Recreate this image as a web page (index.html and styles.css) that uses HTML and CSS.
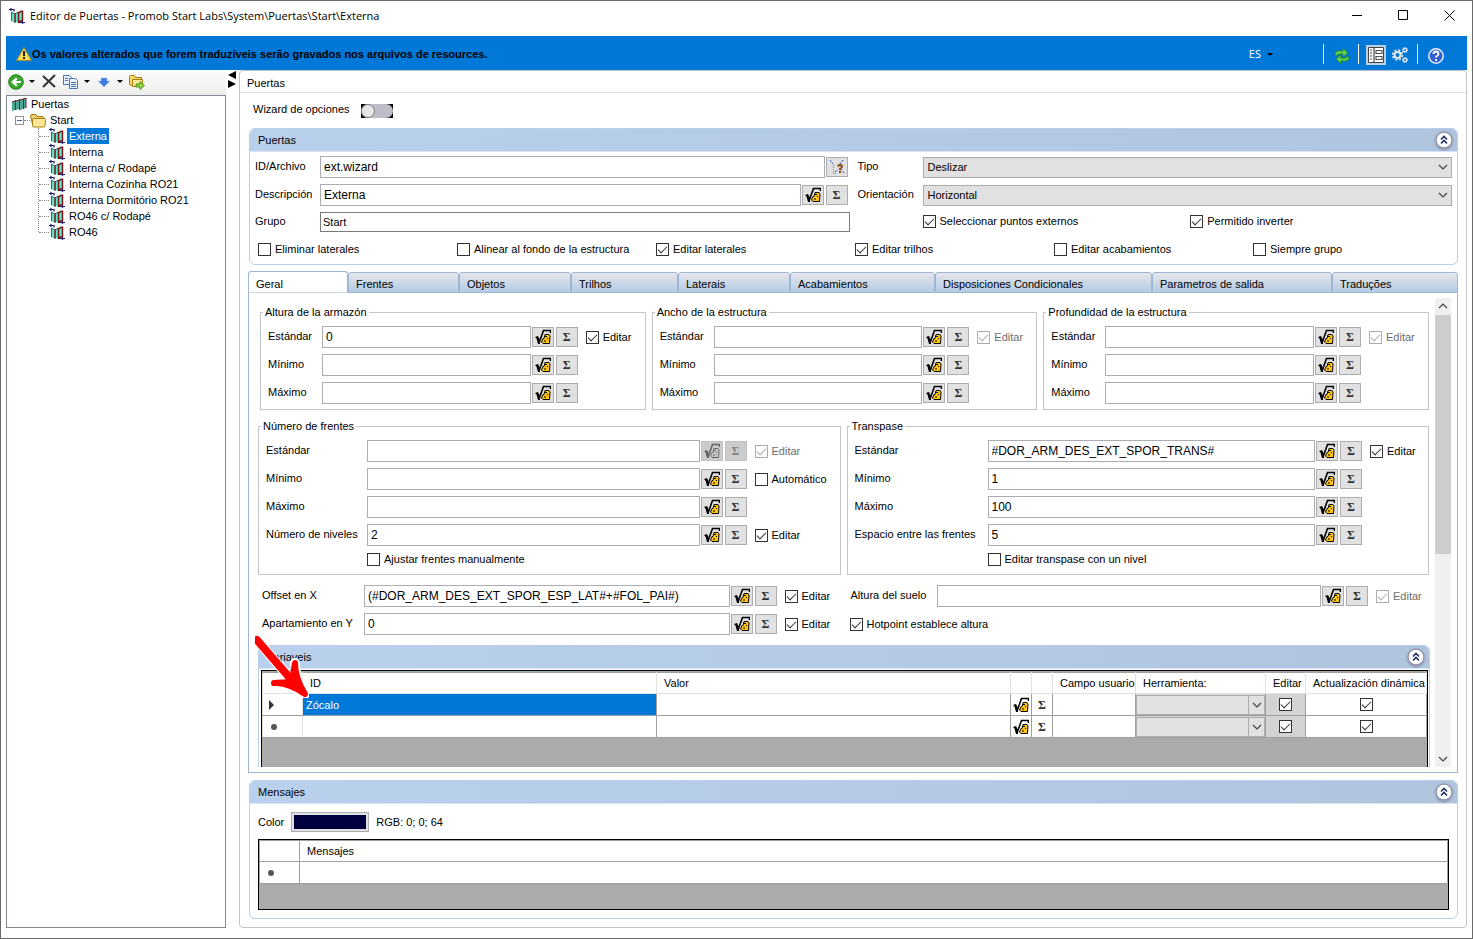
FILE: index.html
```html
<!DOCTYPE html>
<html lang="es">
<head>
    <meta charset="UTF-8">
    <meta name="viewport" content="width=device-width, initial-scale=1.0">
    <title>Editor de Puertas</title>
    <link rel="stylesheet" href="styles.css">
</head>
<body>
    <!-- shared icons -->
    <svg class="sprite" aria-hidden="true">
        <symbol id="i-door" viewBox="0 0 16 16">
            <path d="M2 4l4 2 3-2 1 1 4-2v10l-4 2-1-1-3 1-4-2z" fill="#62e6cb"/>
            <path d="M2.500 4v9M2 4l4 2 3-2" fill="none" stroke="#2b6a66"/>
            <path d="M6 5.500v9M9.500 4v10.500M9 5l4-2M9 14.500l4-2" fill="none" stroke="#7a1518" stroke-width="1.500"/>
            <path d="M13.500 2.500V13" stroke="#7a1518" stroke-width="1.500"/>
            <path d="M0 1.500h5v2M2 0v3M10 14.500h6M13.500 13v3" fill="none" stroke="#14147a" stroke-width="1.200"/>
        </symbol>
        <symbol id="i-sqrt" viewBox="0 0 16 16">
            <path d="M4 14L8.500 1.500h7V4" fill="none" stroke="#000" stroke-width="1.600"/>
            <path d="M0 8l3-1 2 4v4H3L1.500 9.500z" fill="#000"/>
            <path d="M10 5.500h4l1 1.500-.5 7.500H8L6.500 13 8 9.500h1z" fill="#ffc20e" stroke="#000"/>
            <path d="M10 7h2v1h-2zM12 9h1v1h-1zM9 11.500h2v1H9z" fill="#000"/>
        </symbol>
        <symbol id="i-folder" viewBox="0 0 16 16">
            <path d="M.5 4q0-1.500 1.500-1.500h4l1 2h5.500q1.500 0 1.500 1.500v8H3z" fill="#f0d070" stroke="#a67c12"/>
            <path d="M3.500 6.500h11q1 0 1 1l-.5 6q0 1.500-1.500 1.500H4q-1.500 0-1.500-1.500v-6q0-1 1-1z" fill="#fbe795" stroke="#a67c12"/>
        </symbol>
        <symbol id="i-up" viewBox="0 0 18 18">
            <circle cx="9" cy="9" r="8" fill="#fff" stroke="#8f93a5" stroke-width="1.400"/>
            <path d="M6 8.500l3-3 3 3M6 12.500l3-3 3 3" fill="none" stroke="#1f2f66" stroke-width="1.600"/>
        </symbol>
        <symbol id="i-chevron" viewBox="0 0 10 6">
            <path d="M1 1l4 4 4-4" fill="none" stroke="#444" stroke-width="1.200"/>
        </symbol>
    </svg>

    <div class="window">
        <header class="titlebar">
            <svg class="icon"><use href="#i-door"/></svg>
            <h1>Editor de Puertas - Promob Start Labs\System\Puertas\Start\Externa</h1>
            <button type="button" aria-label="Minimizar"><svg viewBox="0 0 11 11"><path d="M0 5.500h10" stroke="#000"/></svg></button>
            <button type="button" aria-label="Maximizar"><svg viewBox="0 0 11 11"><path d="M.5.5h9v9h-9z" fill="none" stroke="#000"/></svg></button>
            <button type="button" aria-label="Cerrar"><svg viewBox="0 0 11 11"><path d="M.5.5l10 10M10.500.5l-10 10" stroke="#000"/></svg></button>
        </header>

        <div class="notice">
            <svg class="icon" viewBox="0 0 16 16">
                <path d="M8 1.500L15.500 14.500H.5z" fill="#f7d94c" stroke="#9a8a3a" stroke-linejoin="round"/>
                <path d="M7 5h2v5H7zM7 11h2v2H7z" fill="#222"/>
            </svg>
            <strong>Os valores alterados que forem traduzíveis serão gravados nos arquivos de resources.</strong>
            <button type="button" class="lang">ES <i class="caret"></i></button>
            <div class="tools">
                <button type="button" aria-label="Actualizar"><svg viewBox="0 0 16 16">
                    <path d="M1 7q0-5 6-4h2V0l5 5-5 4V6H6Q3 6 3 8z" fill="#5fd04a" stroke="#1f7a1f" stroke-width=".7"/>
                    <path d="M15 9q0 5-6 4H7v3l-5-5 5-4v3h3q3 0 3-2z" fill="#5fd04a" stroke="#1f7a1f" stroke-width=".7"/>
                </svg></button>
            </div>
            <div class="tools pair">
                <button type="button" class="on" aria-label="Propiedades"><svg viewBox="0 0 16 16">
                    <path d="M.5.5h15v15H.5z" fill="#fff" stroke="#444"/>
                    <path d="M6 1v14M2 3h2M2 6h2M2 9h2M2 12h2" stroke="#444" stroke-width="1.200"/>
                    <path d="M8 3.500h6v3H8zM8 9.500h6v3H8z" fill="none" stroke="#555" stroke-width="1.200"/>
                </svg></button>
                <button type="button" aria-label="Configuración"><svg viewBox="0 0 16 16" fill="none" stroke="#e6e8ec">
                    <circle cx="5.500" cy="8" r="3" stroke-width="2"/>
                    <circle cx="5.500" cy="8" r="4.800" stroke-width="1.800" stroke-dasharray="2 1.770"/>
                    <circle cx="13" cy="3" r="1.700" stroke-width="1.300"/>
                    <circle cx="13" cy="3" r="2.600" stroke-dasharray="1.100 .940"/>
                    <circle cx="13" cy="13" r="1.700" stroke-width="1.300"/>
                    <circle cx="13" cy="13" r="2.600" stroke-dasharray="1.100 .940"/>
                </svg></button>
            </div>
            <div class="tools">
                <button type="button" aria-label="Ayuda"><svg viewBox="0 0 16 16">
                    <circle cx="8" cy="8" r="7.200" fill="#2f62cf" stroke="#e6edf8" stroke-width="1.500"/>
                    <path d="M5.500 6q0-2.500 2.500-2.500T10.500 6q0 1.200-1.500 2-1 .5-1 1.500M8 11v2" fill="none" stroke="#fff" stroke-width="1.800"/>
                </svg></button>
            </div>
        </div>

        <div class="workspace">
            <aside class="sidebar">
                <div class="toolbar">
                    <button type="button" aria-label="Volver"><svg viewBox="0 0 16 16">
                        <circle cx="8" cy="8" r="7.300" fill="#38a82c" stroke="#1f7d1a"/>
                        <path d="M3 8l5-4.500L9.500 5 8 7h5v2H8l1.500 2L8 12.500z" fill="#fff"/>
                    </svg><i class="caret"></i></button>
                    <button type="button" aria-label="Eliminar"><svg viewBox="0 0 16 16"><path d="M2 2l12 11M14 1L2 13" stroke="#333" stroke-width="2"/></svg></button>
                    <button type="button" aria-label="Copiar"><svg viewBox="0 0 16 16">
                        <path d="M.5 1.500h6l2 2v7h-8z" fill="#e8f0fb" stroke="#4a74b5"/>
                        <path d="M6.500 4.500h6l2 2v8h-8z" fill="#e8f0fb" stroke="#4a74b5"/>
                        <path d="M2 4.500h3M2 6.500h3M8 8.500h5M8 10.500h5M8 12.500h5" stroke="#4a74b5"/>
                    </svg><i class="caret"></i></button>
                    <button type="button" aria-label="Bajar"><svg viewBox="0 0 16 16"><path d="M5 4h6v3h3l-6 6-6-6h3z" fill="#3d7be0" stroke="#a9c7f3" stroke-width=".6"/></svg><i class="caret"></i></button>
                    <button type="button" aria-label="Exportar"><svg viewBox="0 0 16 16">
                        <path d="M.5 2.500q0-1 1-1h4l1 2h6v8h-10q-2 0-2-2z" fill="#f5d76a" stroke="#a67c12"/>
                        <path d="M3.500 5.500h10v7h-10z" fill="#fbe795" stroke="#a67c12"/>
                        <path d="M7 10h4V7.500l4.500 4-4.500 4V13H7z" fill="#8ed63a" stroke="#3f7d12" stroke-width=".8"/>
                    </svg></button>
                </div>
                <nav class="tree" aria-label="Puertas">
                    <div class="node">
                        <svg class="icon" viewBox="0 0 16 16">
                            <path d="M1 6l3-1v9l-3 1zM5 5l3-1v9l-3 1zM9 4l3-1v10l-3 1zM12 3l3-1v10l-3 1z" fill="#4fa596"/>
                            <path d="M1 6l3-1M5 5l3-1M9 4l6-2M4.500 4v10M8.500 3v11M12.500 3v10M15 2v10" fill="none" stroke="#6b2a2a"/>
                        </svg>
                        <a href="#">Puertas</a>
                    </div>
                    <div class="node start">
                        <button type="button" class="expander" aria-label="Contraer"></button>
                        <svg class="icon"><use href="#i-folder"/></svg>
                        <a href="#">Start</a>
                    </div>
                    <ul>
                        <li class="node"><svg class="icon"><use href="#i-door"/></svg><a href="#" class="selected">Externa</a></li>
                        <li class="node"><svg class="icon"><use href="#i-door"/></svg><a href="#">Interna</a></li>
                        <li class="node"><svg class="icon"><use href="#i-door"/></svg><a href="#">Interna c/ Rodapé</a></li>
                        <li class="node"><svg class="icon"><use href="#i-door"/></svg><a href="#">Interna Cozinha RO21</a></li>
                        <li class="node"><svg class="icon"><use href="#i-door"/></svg><a href="#">Interna Dormitório RO21</a></li>
                        <li class="node"><svg class="icon"><use href="#i-door"/></svg><a href="#">RO46 c/ Rodapé</a></li>
                        <li class="node"><svg class="icon"><use href="#i-door"/></svg><a href="#">RO46</a></li>
                    </ul>
                </nav>
            </aside>

            <div class="splitter">
                <svg viewBox="0 0 10 18"><path d="M9 0v8L1 4zM1 9v8l8-4z" fill="#000"/></svg>
            </div>

            <main class="editor">
                <h2 class="editor-title">Puertas</h2>
                <div class="wizard">
                    <label for="wizard">Wizard de opciones</label>
                    <input type="checkbox" id="wizard" class="switch">
                </div>

                <section class="panel">
                    <div class="panel-head"><h3>Puertas</h3><button type="button" aria-label="Contraer"><svg><use href="#i-up"/></svg></button></div>
                    <div class="general">
                        <div class="field">
                            <label for="archivo">ID/Archivo</label>
                            <input type="text" id="archivo" value="ext.wizard">
                            <button type="button" class="btn" aria-label="Asistente"><svg viewBox="0 0 16 16">
                                <path d="M1 1l3 4M14 1l-3 4M12 10l3 4M6 13l3-2" fill="none" stroke="#2f55d4" stroke-dasharray="2 1"/>
                                <path d="M4.500 6v8M4 14.500h3" fill="none" stroke="#2fa0d4" stroke-dasharray="1 1"/>
                                <path d="M9 7.500q0-1.500 2-1.500t2 1.500-2 2V11M10 13h2" fill="none" stroke="#8a4208" stroke-width="1.800"/>
                            </svg></button>
                        </div>
                        <div class="field">
                            <label for="tipo">Tipo</label>
                            <span class="combo"><select id="tipo"><option>Deslizar</option></select><svg><use href="#i-chevron"/></svg></span>
                        </div>
                        <div class="field">
                            <label for="descripcion">Descripción</label>
                            <input type="text" id="descripcion" value="Externa">
                            <button type="button" class="btn" aria-label="Fórmula"><svg><use href="#i-sqrt"/></svg></button>
                            <button type="button" class="btn">Σ</button>
                        </div>
                        <div class="field">
                            <label for="orientacion">Orientación</label>
                            <span class="combo"><select id="orientacion"><option>Horizontal</option></select><svg><use href="#i-chevron"/></svg></span>
                        </div>
                        <div class="field grupo">
                            <label for="grupo">Grupo</label>
                            <input type="text" id="grupo" value="Start">
                        </div>
                        <div class="two-checks">
                            <label class="check"><input type="checkbox" checked>Seleccionar puntos externos</label>
                            <label class="check"><input type="checkbox" checked>Permitido inverter</label>
                        </div>
                    </div>
                    <div class="check-row">
                        <label class="check"><input type="checkbox">Eliminar laterales</label>
                        <label class="check"><input type="checkbox">Alinear al fondo de la estructura</label>
                        <label class="check"><input type="checkbox" checked>Editar laterales</label>
                        <label class="check"><input type="checkbox" checked>Editar trilhos</label>
                        <label class="check"><input type="checkbox">Editar acabamientos</label>
                        <label class="check"><input type="checkbox">Siempre grupo</label>
                    </div>
                </section>

                <div class="tabs" role="tablist">
                    <button type="button" role="tab" class="active" aria-selected="true">Geral</button>
                    <button type="button" role="tab">Frentes</button>
                    <button type="button" role="tab">Objetos</button>
                    <button type="button" role="tab">Trilhos</button>
                    <button type="button" role="tab">Laterais</button>
                    <button type="button" role="tab">Acabamientos</button>
                    <button type="button" role="tab">Disposiciones Condicionales</button>
                    <button type="button" role="tab">Parametros de salida</button>
                    <button type="button" role="tab">Traduções</button>
                </div>

                <div class="tab-body">
                    <div class="scroll-area">
                        <div class="sizes">
                            <fieldset>
                                <legend>Altura de la armazón</legend>
                                <div class="field">
                                    <label for="alt-est">Estándar</label>
                                    <input type="text" id="alt-est" value="0">
                                    <button type="button" class="btn" aria-label="Fórmula"><svg><use href="#i-sqrt"/></svg></button>
                                    <button type="button" class="btn">Σ</button>
                                    <label class="check"><input type="checkbox" checked>Editar</label>
                                </div>
                                <div class="field">
                                    <label for="alt-min">Mínimo</label>
                                    <input type="text" id="alt-min">
                                    <button type="button" class="btn" aria-label="Fórmula"><svg><use href="#i-sqrt"/></svg></button>
                                    <button type="button" class="btn">Σ</button>
                                </div>
                                <div class="field">
                                    <label for="alt-max">Máximo</label>
                                    <input type="text" id="alt-max">
                                    <button type="button" class="btn" aria-label="Fórmula"><svg><use href="#i-sqrt"/></svg></button>
                                    <button type="button" class="btn">Σ</button>
                                </div>
                            </fieldset>
                            <fieldset>
                                <legend>Ancho de la estructura</legend>
                                <div class="field">
                                    <label for="anc-est">Estándar</label>
                                    <input type="text" id="anc-est">
                                    <button type="button" class="btn" aria-label="Fórmula"><svg><use href="#i-sqrt"/></svg></button>
                                    <button type="button" class="btn">Σ</button>
                                    <label class="check disabled"><input type="checkbox" checked disabled>Editar</label>
                                </div>
                                <div class="field">
                                    <label for="anc-min">Mínimo</label>
                                    <input type="text" id="anc-min">
                                    <button type="button" class="btn" aria-label="Fórmula"><svg><use href="#i-sqrt"/></svg></button>
                                    <button type="button" class="btn">Σ</button>
                                </div>
                                <div class="field">
                                    <label for="anc-max">Máximo</label>
                                    <input type="text" id="anc-max">
                                    <button type="button" class="btn" aria-label="Fórmula"><svg><use href="#i-sqrt"/></svg></button>
                                    <button type="button" class="btn">Σ</button>
                                </div>
                            </fieldset>
                            <fieldset>
                                <legend>Profundidad de la estructura</legend>
                                <div class="field">
                                    <label for="pro-est">Estándar</label>
                                    <input type="text" id="pro-est">
                                    <button type="button" class="btn" aria-label="Fórmula"><svg><use href="#i-sqrt"/></svg></button>
                                    <button type="button" class="btn">Σ</button>
                                    <label class="check disabled"><input type="checkbox" checked disabled>Editar</label>
                                </div>
                                <div class="field">
                                    <label for="pro-min">Mínimo</label>
                                    <input type="text" id="pro-min">
                                    <button type="button" class="btn" aria-label="Fórmula"><svg><use href="#i-sqrt"/></svg></button>
                                    <button type="button" class="btn">Σ</button>
                                </div>
                                <div class="field">
                                    <label for="pro-max">Máximo</label>
                                    <input type="text" id="pro-max">
                                    <button type="button" class="btn" aria-label="Fórmula"><svg><use href="#i-sqrt"/></svg></button>
                                    <button type="button" class="btn">Σ</button>
                                </div>
                            </fieldset>
                        </div>

                        <div class="halves">
                            <fieldset class="frentes">
                                <legend>Número de frentes</legend>
                                <div class="field">
                                    <label for="fre-est">Estándar</label>
                                    <input type="text" id="fre-est">
                                    <button type="button" class="btn" aria-label="Fórmula" disabled><svg><use href="#i-sqrt"/></svg></button>
                                    <button type="button" class="btn" disabled>Σ</button>
                                    <label class="check disabled"><input type="checkbox" checked disabled>Editar</label>
                                </div>
                                <div class="field">
                                    <label for="fre-min">Mínimo</label>
                                    <input type="text" id="fre-min">
                                    <button type="button" class="btn" aria-label="Fórmula"><svg><use href="#i-sqrt"/></svg></button>
                                    <button type="button" class="btn">Σ</button>
                                    <label class="check"><input type="checkbox">Automático</label>
                                </div>
                                <div class="field">
                                    <label for="fre-max">Máximo</label>
                                    <input type="text" id="fre-max">
                                    <button type="button" class="btn" aria-label="Fórmula"><svg><use href="#i-sqrt"/></svg></button>
                                    <button type="button" class="btn">Σ</button>
                                </div>
                                <div class="field">
                                    <label for="niveles">Número de niveles</label>
                                    <input type="text" id="niveles" value="2">
                                    <button type="button" class="btn" aria-label="Fórmula"><svg><use href="#i-sqrt"/></svg></button>
                                    <button type="button" class="btn">Σ</button>
                                    <label class="check"><input type="checkbox" checked>Editar</label>
                                </div>
                                <label class="check under"><input type="checkbox">Ajustar frentes manualmente</label>
                            </fieldset>
                            <fieldset class="transpase">
                                <legend>Transpase</legend>
                                <div class="field">
                                    <label for="tra-est">Estándar</label>
                                    <input type="text" id="tra-est" value="#DOR_ARM_DES_EXT_SPOR_TRANS#">
                                    <button type="button" class="btn" aria-label="Fórmula"><svg><use href="#i-sqrt"/></svg></button>
                                    <button type="button" class="btn">Σ</button>
                                    <label class="check"><input type="checkbox" checked>Editar</label>
                                </div>
                                <div class="field">
                                    <label for="tra-min">Mínimo</label>
                                    <input type="text" id="tra-min" value="1">
                                    <button type="button" class="btn" aria-label="Fórmula"><svg><use href="#i-sqrt"/></svg></button>
                                    <button type="button" class="btn">Σ</button>
                                </div>
                                <div class="field">
                                    <label for="tra-max">Máximo</label>
                                    <input type="text" id="tra-max" value="100">
                                    <button type="button" class="btn" aria-label="Fórmula"><svg><use href="#i-sqrt"/></svg></button>
                                    <button type="button" class="btn">Σ</button>
                                </div>
                                <div class="field">
                                    <label for="espacio">Espacio entre las frentes</label>
                                    <input type="text" id="espacio" value="5">
                                    <button type="button" class="btn" aria-label="Fórmula"><svg><use href="#i-sqrt"/></svg></button>
                                    <button type="button" class="btn">Σ</button>
                                </div>
                                <label class="check under"><input type="checkbox">Editar transpase con un nivel</label>
                            </fieldset>
                        </div>

                        <div class="halves offsets">
                            <div class="field">
                                <label for="offset-x">Offset en X</label>
                                <input type="text" id="offset-x" value="(#DOR_ARM_DES_EXT_SPOR_ESP_LAT#+#FOL_PAI#)">
                                <button type="button" class="btn" aria-label="Fórmula"><svg><use href="#i-sqrt"/></svg></button>
                                <button type="button" class="btn">Σ</button>
                                <label class="check"><input type="checkbox" checked>Editar</label>
                            </div>
                            <div class="field suelo">
                                <label for="suelo">Altura del suelo</label>
                                <input type="text" id="suelo">
                                <button type="button" class="btn" aria-label="Fórmula"><svg><use href="#i-sqrt"/></svg></button>
                                <button type="button" class="btn">Σ</button>
                                <label class="check disabled"><input type="checkbox" checked disabled>Editar</label>
                            </div>
                            <div class="field">
                                <label for="apart-y">Apartamiento en Y</label>
                                <input type="text" id="apart-y" value="0">
                                <button type="button" class="btn" aria-label="Fórmula"><svg><use href="#i-sqrt"/></svg></button>
                                <button type="button" class="btn">Σ</button>
                                <label class="check"><input type="checkbox" checked>Editar</label>
                            </div>
                            <label class="check hotpoint"><input type="checkbox" checked>Hotpoint establece altura</label>
                        </div>

                        <section class="panel variables">
                            <div class="panel-head"><h3>Variaveis</h3><button type="button" aria-label="Contraer"><svg><use href="#i-up"/></svg></button></div>
                            <div class="grid-box">
                                <table class="light-head">
                                    <colgroup>
                                        <col class="c-row"><col><col><col class="c-tool"><col class="c-tool"><col class="c-campo"><col class="c-herr"><col class="c-row"><col class="c-act">
                                    </colgroup>
                                    <thead>
                                        <tr><th></th><th>ID</th><th>Valor</th><th></th><th></th><th>Campo usuario</th><th>Herramienta:</th><th>Editar</th><th>Actualización dinámica</th></tr>
                                    </thead>
                                    <tbody>
                                        <tr>
                                            <th scope="row"><i class="current"></i></th>
                                            <td class="selected">Zócalo</td>
                                            <td></td>
                                            <td class="mid"><button type="button" class="cell-btn" aria-label="Fórmula"><svg><use href="#i-sqrt"/></svg></button></td>
                                            <td class="mid"><button type="button" class="cell-btn">Σ</button></td>
                                            <td></td>
                                            <td class="gray"><span class="combo"><select aria-label="Herramienta"><option></option></select><svg><use href="#i-chevron"/></svg></span></td>
                                            <td class="mid gray"><input type="checkbox" aria-label="Editar" checked></td>
                                            <td class="mid"><input type="checkbox" aria-label="Actualización dinámica" checked></td>
                                        </tr>
                                        <tr>
                                            <th scope="row"><i class="new"></i></th>
                                            <td></td>
                                            <td></td>
                                            <td class="mid"><button type="button" class="cell-btn" aria-label="Fórmula"><svg><use href="#i-sqrt"/></svg></button></td>
                                            <td class="mid"><button type="button" class="cell-btn">Σ</button></td>
                                            <td></td>
                                            <td class="gray"><span class="combo"><select aria-label="Herramienta"><option></option></select><svg><use href="#i-chevron"/></svg></span></td>
                                            <td class="mid gray"><input type="checkbox" aria-label="Editar" checked></td>
                                            <td class="mid"><input type="checkbox" aria-label="Actualización dinámica" checked></td>
                                        </tr>
                                    </tbody>
                                </table>
                            </div>
                            <!-- red pointer over the first row -->
                            <svg class="pointer" viewBox="0 0 60 66">
                                <path d="M8 8L46 52M25 51q14-1 31 11Q46 46 46 31" fill="none" stroke="#fff" stroke-width="10" stroke-linecap="round" stroke-linejoin="round"/>
                                <path d="M8 8L46 52" stroke="#f00" stroke-width="8" stroke-linecap="round"/>
                                <path d="M25 51q14-1 31 11Q46 46 46 31L43 50z" fill="#f00" stroke="#f00" stroke-width="6" stroke-linecap="round" stroke-linejoin="round"/>
                            </svg>
                        </section>
                    </div>
                    <div class="scrollbar">
                        <button type="button" class="up" aria-label="Subir"><svg><use href="#i-chevron"/></svg></button>
                        <div class="track"><div class="thumb"></div></div>
                        <button type="button" aria-label="Bajar"><svg><use href="#i-chevron"/></svg></button>
                    </div>
                </div>

                <section class="panel messages">
                    <div class="panel-head"><h3>Mensajes</h3><button type="button" aria-label="Contraer"><svg><use href="#i-up"/></svg></button></div>
                    <div class="color-row">
                        <label for="color">Color</label>
                        <button type="button" id="color" class="swatch" aria-label="Color"></button>
                        <span>RGB: 0; 0; 64</span>
                    </div>
                    <div class="grid-box">
                        <table>
                            <colgroup><col class="c-row"><col></colgroup>
                            <thead><tr><th></th><th>Mensajes</th></tr></thead>
                            <tbody><tr><th scope="row"><i class="new"></i></th><td></td></tr></tbody>
                        </table>
                    </div>
                </section>
            </main>
        </div>
    </div>
</body>
</html>
```

FILE: styles.css
```css
* {
    box-sizing: border-box;
}
body {
    margin: 0;
    font-family: "Liberation Sans", Arial, sans-serif;
    font-size: 11px;
    line-height: 14px;
    color: #000;
    background: #fff;
}
button, input, select {
    font: inherit;
    color: inherit;
    margin: 0;
    border-radius: 0;
}
button {
    padding: 0;
    border: none;
    background: none;
}
svg {
    display: block;
    flex: none;
}
h1, h2, h3 {
    margin: 0;
    font-size: 11px;
    font-weight: normal;
}
.sprite {
    display: none;
}
.icon {
    width: 16px;
    height: 16px;
}
.caret {
    display: inline-block;
    border: 3px solid transparent;
    border-top-color: #000;
    border-bottom: none;
}

/* window frame */
.window {
    height: 100vh;
    display: flex;
    flex-direction: column;
    border: 1px solid #6b6b6b;
    padding: 0 5px 10px;
}
.titlebar {
    display: flex;
    align-items: center;
    height: 35px;
    flex: none;
    padding: 0 12px 6px 3px;
    gap: 5px;
}
.titlebar h1 {
    flex: 1;
    font-family: "Open Sans", "Noto Sans", sans-serif;
    font-size: 11px;
    line-height: 16px;
}
.titlebar button {
    width: 11px;
    margin-left: 30px;
}
.titlebar button svg {
    width: 11px;
    height: 11px;
}

/* blue bar */
.notice {
    display: flex;
    align-items: center;
    height: 34px;
    flex: none;
    padding: 2px 13px 0 10px;
    background: #0078d7;
}
.notice strong {
    flex: 1;
}
.lang {
    color: #fff;
    font-family: "Open Sans", "Noto Sans", sans-serif;
    font-size: 11px;
    display: flex;
    align-items: center;
    gap: 6px;
    margin-right: 50px;
}
.tools {
    display: flex;
    align-items: center;
    height: 20px;
    border-left: 1px solid #fff;
    padding: 4px 8px 0 10px;
    gap: 6px;
}
.tools.pair {
    padding: 2px 9px 0 7px;
}
.tools:last-child {
    padding-right: 10px;
}
.tools svg {
    width: 16px;
    height: 16px;
}
.tools .on {
    padding: 2px;
    background: #bcd0e6;
}

.workspace {
    flex: 1;
    min-height: 0;
    display: flex;
}

/* left side */
.sidebar {
    width: 220px;
    flex: none;
    display: flex;
    flex-direction: column;
}
.toolbar {
    display: flex;
    align-items: center;
    height: 25px;
    padding: 0 2px 2px;
    gap: 6px;
    background: linear-gradient(#fcfcfc, #ededed);
}
.toolbar button {
    display: flex;
    align-items: center;
    gap: 5px;
}
.toolbar svg {
    width: 16px;
    height: 16px;
}
.tree {
    flex: 1;
    border: 1px solid #828790;
    background: #fff;
    padding: 0 4px;
}
.node {
    display: flex;
    align-items: center;
    height: 16px;
}
.node a {
    color: #000;
    text-decoration: none;
    padding: 1px 2px;
    margin-left: 2px;
}
.node a.selected {
    background: #0078d7;
    color: #fff;
}
.start {
    padding-left: 4px;
}
.start::after {
    content: "";
    order: 1;
    width: 6px;
    border-top: 1px dotted #888;
}
.start .icon, .start a {
    order: 2;
}
.expander {
    width: 9px;
    height: 9px;
    border: 1px solid #919191;
    display: flex;
    align-items: center;
    justify-content: center;
}
.expander::before {
    content: "";
    width: 5px;
    height: 1px;
    background: #4b63a7;
}
.tree ul {
    list-style: none;
    margin: 0 0 0 27px;
    padding: 0;
    border-left: 1px dotted #888;
    height: 104px;
}
.tree li::before {
    content: "";
    width: 10px;
    border-top: 1px dotted #888;
}
.splitter {
    width: 13px;
    flex: none;
    padding: 1px;
}
.splitter svg {
    width: 10px;
    height: 18px;
}

/* right side */
.editor {
    flex: 1;
    min-width: 0;
    display: flex;
    flex-direction: column;
    border: 1px solid #c3c3c3;
    border-radius: 4px;
    padding: 0 8px 8px 9px;
}
.editor-title {
    margin: 0 -8px 0 -9px;
    height: 22px;
    padding: 5px 7px 0;
    border-bottom: 1px solid #dedede;
    flex: none;
}
.wizard {
    display: flex;
    align-items: center;
    gap: 11px;
    height: 35px;
    flex: none;
    padding-left: 4px;
}
.wizard label {
    padding-bottom: 3px;
}
.switch {
    appearance: none;
    display: flex;
    align-items: center;
    width: 32px;
    height: 14px;
    background: #000;
}
.switch::before {
    content: "";
    flex: none;
    width: 32px;
    height: 14px;
    background: #bcbdc8;
    border-radius: 7px;
}
.switch::after {
    content: "";
    flex: none;
    width: 14px;
    height: 14px;
    box-sizing: border-box;
    margin-left: -32px;
    border: 1px solid #777;
    border-radius: 7px;
    background: #e6e6e6;
}

.panel {
    flex: none;
    border: 1px solid #b8d0ec;
    border-radius: 6px;
    background: #fff;
}
.panel-head {
    display: flex;
    align-items: center;
    justify-content: space-between;
    height: 23px;
    padding: 0 4px 0 8px;
    border-radius: 5px 5px 0 0;
    border-bottom: 1px solid #d7e4f3;
    background: linear-gradient(to right, #b9d1ec, #b0c4de);
}
.panel-head svg {
    width: 18px;
    height: 18px;
    border-radius: 9px;
    box-shadow: 0 1px 2px #7d8599;
}

/* fields */
.field {
    display: flex;
    align-items: center;
    height: 22px;
}
.field > label:first-child {
    flex: none;
    padding-bottom: 3px;
}
input[type="text"] {
    flex: 1;
    min-width: 0;
    height: 22px;
    border: 1px solid #abadb3;
    padding: 0 3px;
    font-size: 12px;
    background: #fff;
    margin-right: 1px;
}
.btn {
    width: 22px;
    height: 20px;
    flex: none;
    border: 1px solid #adadad;
    background: #e1e1e1;
    display: flex;
    align-items: center;
    justify-content: center;
    font: bold 12px/14px "Liberation Serif", serif;
    color: #333;
}
.btn + .btn {
    margin-left: 2px;
}
.btn svg, .cell-btn svg {
    width: 16px;
    height: 16px;
}
.btn:disabled {
    background: #ccc;
    border-color: #bfbfbf;
    color: #838383;
}
.btn:disabled svg {
    filter: grayscale(1);
    opacity: 0.5;
}
.check {
    display: flex;
    align-items: center;
    gap: 4px;
    white-space: nowrap;
}
.check.disabled {
    color: #6d6d6d;
}
input[type="checkbox"]:not(.switch) {
    appearance: none;
    display: flex;
    justify-content: center;
    flex: none;
    width: 13px;
    height: 13px;
    border: 1px solid #333;
    background: #fff;
}
input[type="checkbox"]:checked:not(.switch)::before {
    content: "";
    box-sizing: border-box;
    width: 9px;
    height: 5px;
    margin-top: 2px;
    border-left: 1px solid #333;
    border-bottom: 1px solid #333;
    transform: rotate(-45deg);
}
input[type="checkbox"]:disabled {
    opacity: 0.4;
}
.combo {
    flex: 1;
    display: grid;
    align-items: center;
}
.combo select, .combo svg {
    grid-area: 1 / 1;
}
.combo select {
    appearance: none;
    width: 100%;
    height: 21px;
    border: 1px solid #adadad;
    background: #e1e1e1;
    padding: 0 4px;
}
.combo svg {
    width: 10px;
    height: 6px;
    justify-self: end;
    margin-right: 4px;
    pointer-events: none;
}

.general {
    display: grid;
    grid-template-columns: 1fr 1fr;
    gap: 6px 8px;
    padding: 4px 5px 0;
}
.general .field > label:first-child {
    width: 65px;
}
.general .btn {
    margin-right: 2px;
}
.general .btn + .btn {
    margin-left: 0;
}
.general .grupo {
    height: 20px;
}
.general #grupo {
    height: 20px;
    border-color: #7a7a7a;
    padding: 0 2px;
    margin-right: 0;
    font-size: 11px;
}
.two-checks {
    display: grid;
    grid-template-columns: 1fr 1fr;
    column-gap: 6px;
    align-items: center;
    height: 18px;
    padding-left: 65px;
}
.check-row {
    display: grid;
    grid-template-columns: repeat(6, 1fr);
    padding: 10px 5px 8px 8px;
}

/* tabs */
.tabs {
    display: grid;
    grid-template-columns: 100fr 111fr 112fr 107fr 112fr 145fr 217fr 180fr 126fr;
    height: 22px;
    flex: none;
    margin: 6px 0 0 -1px;
    align-items: end;
}
.tabs button {
    height: 21px;
    text-align: left;
    padding: 2px 0 0 7px;
    border: 1px solid #9fb6d3;
    border-radius: 3px 3px 0 0;
    background: linear-gradient(#e5e7ea, #b4cae6);
    white-space: nowrap;
}
.tabs .active {
    height: 22px;
    padding-top: 3px;
    background: #fff;
    border-bottom-color: #c9d7e8;
}
.tab-body {
    flex: 1;
    min-height: 0;
    display: flex;
    margin-left: -1px;
    border: 1px solid #9fb6d3;
    border-top: none;
    padding: 5px 6px;
    gap: 5px;
}
.scroll-area {
    flex: 1;
    min-width: 0;
    overflow: hidden;
    padding: 7px 0 0 3px;
}
.scrollbar {
    width: 16px;
    display: flex;
    flex-direction: column;
    background: #f0f0f0;
}
.scrollbar button {
    height: 17px;
    display: flex;
    align-items: center;
    justify-content: center;
}
.scrollbar button svg {
    width: 10px;
    height: 6px;
}
.scrollbar .up {
    transform: rotate(180deg);
}
.track {
    flex: 1;
}
.thumb {
    height: 55%;
    background: #cdcdcd;
}

fieldset {
    margin: 0;
    min-width: 0;
    border: 1px solid #c3c7cb;
    padding: 7px 0 5px 7px;
    display: flex;
    flex-direction: column;
    gap: 6px;
}
legend {
    margin-left: -5px;
    padding: 0 2px;
}
.field .check {
    margin-left: 8px;
}
fieldset .field, .offsets .field {
    display: grid;
    grid-template-columns: 54px 1fr 22px 24px 67px;
}
.sizes {
    display: grid;
    grid-template-columns: 1fr 1fr 1fr;
    gap: 6px;
    margin: 0 1px 9px 2px;
}
.halves {
    display: grid;
    grid-template-columns: 1fr 1fr;
    gap: 6px;
    margin: 0 1px 10px 0;
}
.halves fieldset {
    padding-bottom: 8px;
}
fieldset.frentes .field {
    grid-template-columns: 101px 1fr 22px 24px 93px;
}
fieldset.transpase .field {
    grid-template-columns: 133px 1fr 22px 24px 66px;
}
.under {
    margin-left: 101px;
}
.transpase .under {
    margin-left: 133px;
}
.offsets .field {
    padding-left: 4px;
    grid-template-columns: 102px 1fr 22px 24px 64px;
}
.offsets .suelo {
    grid-template-columns: 86px 1fr 22px 24px 61px;
}
.hotpoint {
    padding-left: 3px;
}

/* data grids */
.variables {
    position: relative;
    padding-bottom: 8px;
    border-top-left-radius: 0;
}
.variables .panel-head {
    border-top-left-radius: 0;
}
.grid-box {
    border: 1px solid #000;
    background: #ababab;
}
.variables .grid-box {
    height: 120px;
    margin: 1px 1px 0 2px;
    padding: 1px 0 0;
}
table {
    width: 100%;
    table-layout: fixed;
    border-collapse: collapse;
}
th, td {
    height: 22px;
    padding: 0;
    border: 1px solid #a0a0a0;
    background: #fff;
    text-align: left;
    font-weight: normal;
    white-space: nowrap;
}
thead th {
    padding-left: 7px;
    height: 21px;
}
.light-head th {
    border-color: #e2e2e2;
    border-top-color: #a0a0a0;
}
.light-head tbody th {
    border-bottom-color: #a0a0a0;
}
td {
    padding-left: 3px;
}
td.selected {
    background: #0078d7;
    color: #fff;
}
td.gray {
    background: #d3d3d3;
    padding: 0;
}
td.mid {
    padding: 0;
    text-align: center;
}
td.mid > * {
    margin: 0 auto;
}
td .combo select {
    height: 20px;
}
td .combo svg {
    margin-right: 0;
    padding: 7px 3px;
    width: 17px;
    height: 20px;
    border-left: 1px solid #adadad;
}
.cell-btn {
    display: block;
    width: 16px;
    font: bold 12px/16px "Liberation Serif", serif;
    color: #333;
}
.c-row { width: 40px; }
.c-tool { width: 21px; }
.c-campo { width: 83px; }
.c-herr { width: 130px; }
.c-act { width: 121px; }
.current {
    display: block;
    margin-left: 6px;
    width: 0;
    border: 5px solid transparent;
    border-left-color: #333;
    border-right: none;
}
.new {
    display: block;
    margin-left: 8px;
    width: 6px;
    height: 6px;
    border-radius: 3px;
    background: #555;
}
.pointer {
    position: absolute;
    left: -10px;
    top: -14px;
    width: 60px;
    height: 66px;
    pointer-events: none;
}

.messages {
    margin-top: 7px;
    padding-bottom: 8px;
}
.color-row {
    display: flex;
    align-items: center;
    gap: 7px;
    padding: 8px 8px 7px;
}
.swatch {
    width: 78px;
    height: 20px;
    border: 1px solid #adadad;
    padding: 2px;
    background: #000040 content-box;
    outline: 2px solid #e1e1e1;
    outline-offset: -3px;
}
.messages .grid-box {
    margin: 0 8px;
    padding-bottom: 25px;
}
```
